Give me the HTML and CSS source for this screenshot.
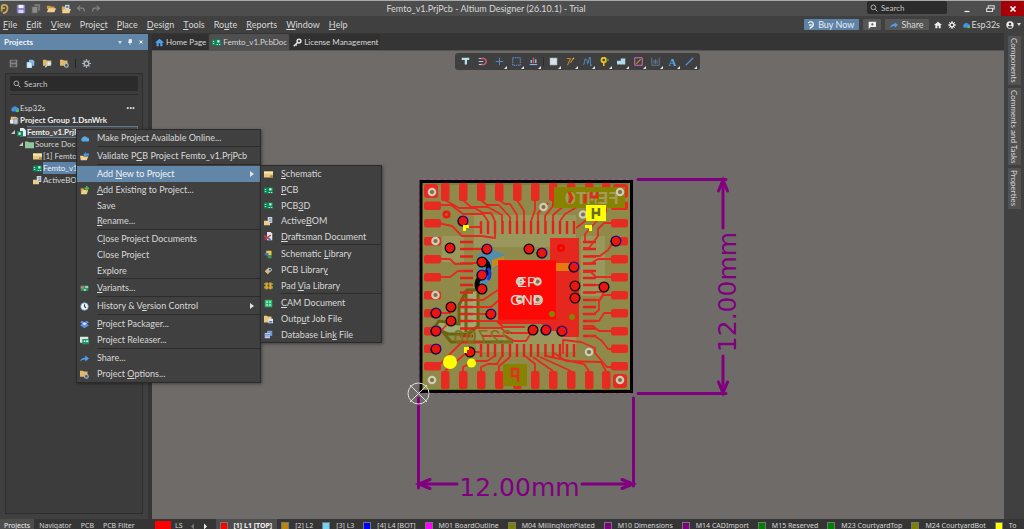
FILE: index.html
```html
<!DOCTYPE html>
<html lang="en">
<head>
<meta charset="utf-8">
<title>Femto_v1.PrjPcb - Altium Designer (26.10.1) - Trial</title>
<link rel="stylesheet" href="styles.css">
</head>
<body>
<svg class="defs" aria-hidden="true">
  <symbol id="folder" viewBox="0 0 12 12"><path d="M1 2h4l1 1h5v7H1z" fill="#d9b36a"/><path d="M1 5h10v5H1z" fill="#efcf8f"/></symbol>
  <symbol id="open" viewBox="0 0 12 12"><path d="M1 2h4l1 1h4v3H1z" fill="#c99c48"/><path d="M3 5h9l-2 5H1z" fill="#f0cf8c"/></symbol>
  <symbol id="find" viewBox="0 0 12 12"><path d="M0 1h4l1 1h6v7H0z" fill="#e3b968"/><circle cx="8" cy="6" r="2.500" fill="#dfeefa" stroke="#b9d3ea"/><path d="M6 8l-3 3" stroke="#cfd9e2" stroke-width="1.500"/></symbol>
  <symbol id="opendoc" viewBox="0 0 12 12"><path d="M1 3h4v6H1z" fill="#d9a94e"/><path d="M5 1h5v6H5z" fill="#dfeaf7"/><path d="M6 2h3v3H6z" fill="#4f8ad0"/><path d="M3 6h9l-2 5H1z" fill="#f0cf8c"/></symbol>
  <symbol id="validate" viewBox="0 0 12 12"><path d="M0 5h4l1 1h6l-2 5H1z" fill="#f0cf8c"/><path d="M4 4l4-4v2h4v3H8v2z" fill="#4f8ff0"/></symbol>
  <symbol id="addfolder" viewBox="0 0 12 12"><path d="M1 3h4v6H1z" fill="#c99c48"/><path d="M3 5h8l-2 6H1z" fill="#f0cf8c"/><path d="M8 0h2v2h2v2h-2v2H8V4H6V2h2z" fill="#45c52c"/></symbol>
  <symbol id="foldergear" viewBox="0 0 12 12"><path d="M0 1h4l1 1h5v7H0z" fill="#e0b96f"/><circle cx="8.500" cy="8.500" r="2.500" fill="#555" stroke="#b5bec6" stroke-width="1.400"/></symbol>
  <symbol id="save" viewBox="0 0 12 12"><path d="M1 1h10v10H1z" fill="#8079c4"/><path d="M3 1h6v4H3z" fill="#f3f1ff"/><path d="M3 7h6v4H3z" fill="#d9d6f4"/></symbol>
  <symbol id="savegrey" viewBox="0 0 12 12"><path d="M1 1h10v10H1z" fill="#858585"/><path d="M3 2h6v3H3zM3 7h6v3H3z" fill="#505050"/></symbol>
  <symbol id="saveall" viewBox="0 0 12 12"><path d="M4 0h7v8H4z" fill="#777"/><path d="M1 3h7v8H1z" fill="#8c8c8c" stroke="#555"/></symbol>
  <symbol id="docs" viewBox="0 0 12 12"><path d="M4 1h5l2 2v6H4z" fill="#83b9e8"/><path d="M1 4h5l2 2v6H1z" fill="#d8eafa" stroke="#3e7fb8" stroke-width=".500"/></symbol>
  <symbol id="undo" viewBox="0 0 12 12"><path d="M5 2L2 5l3 3M2 5h6q2 0 2 4" fill="none" stroke="#828282" stroke-width="1.500"/></symbol>
  <symbol id="redo" viewBox="0 0 12 12"><path d="M7 2l3 3-3 3M10 5H4Q2 5 2 9" fill="none" stroke="#828282" stroke-width="1.500"/></symbol>
  <symbol id="gear" viewBox="0 0 12 12"><circle cx="6" cy="6" r="3" fill="none" stroke="currentColor" stroke-width="2"/><path d="M6 0v3M6 9v3M0 6h3M9 6h3M2 2l2 2M8 8l2 2M10 2L8 4M4 8l-2 2" stroke="currentColor" stroke-width="1.500"/></symbol>
  <symbol id="cloud" viewBox="0 0 12 12"><path d="M3 10a3 3 0 0 1 0-5 4 4 0 0 1 7 0 2.500 2.500 0 0 1 0 5z" fill="#58a9e6"/></symbol>
  <symbol id="cloudok" viewBox="0 0 12 12"><path d="M3 10a3 3 0 0 1 0-5 4 4 0 0 1 7 0 2.500 2.500 0 0 1 0 5z" fill="#3f93e0"/><circle cx="10" cy="9" r="2" fill="#56c653"/></symbol>
  <symbol id="pcb" viewBox="0 0 12 12"><path d="M0 2h12v8H0z" fill="#0c8758"/><path d="M1 4h2v1H1zm0 3h2v1H1zM7 3h3v3H7zM6 8h2v1H6zM9 8h2v1H9z" fill="#d9fff0"/></symbol>
  <symbol id="sch" viewBox="0 0 12 12"><path d="M0 2h12v8H0z" fill="#e7c87c"/><path d="M0 2h12v3H0z" fill="#f6e5ad"/><path d="M8 7h4v3H8z" fill="#ad8a41"/></symbol>
  <symbol id="bom" viewBox="0 0 12 12"><path d="M0 5h8v6H0z" fill="#edcd84"/><path d="M5 0h6v8H5z" fill="#cdd7e4"/><path d="M7 2h3M7 4h3M7 6h3" stroke="#747f9a"/></symbol>
  <symbol id="draft" viewBox="0 0 12 12"><path d="M4 0h5l2 2v9H4z" fill="#dfe7f3"/><path d="M0 5l8 5M1 10l8-6" stroke="#cf3946" stroke-width="2"/><path d="M6 8l3 3" stroke="#4377d2" stroke-width="2"/></symbol>
  <symbol id="schlib" viewBox="0 0 12 12"><path d="M3 1h7v6H3z" fill="#e9c84e"/><path d="M1 4h5v3H1z" fill="#3779c4"/><path d="M5 7h5v4H5z" fill="#3c9f4c"/></symbol>
  <symbol id="pcblib" viewBox="0 0 12 12"><path d="M1 7l5-5 5 3-6 6z" fill="#dfbd70"/><circle cx="8" cy="5" r="2" fill="#34546f" stroke="#b6d3ec"/></symbol>
  <symbol id="padlib" viewBox="0 0 12 12"><path d="M0 3h12v2H0zm0 4h12v3H0z" fill="#7ca72e"/><path d="M2 2h3v9H2zm5 0h3v9H7z" fill="#dda63a"/><path d="M5 5h2v3H5z" fill="#b24221"/></symbol>
  <symbol id="cam" viewBox="0 0 12 12"><path d="M1 1h10v10H1z" fill="#2eb872"/><path d="M3 3h2v2H3zm4 0h2v2H7zM3 7h2v2H3zm4 0h2v2H7z" fill="#caffe1"/></symbol>
  <symbol id="job" viewBox="0 0 12 12"><path d="M0 1h4l1 1h5v8H0z" fill="#e9c77f"/><path d="M6 5h6v6H6z" fill="#dce9fb"/><path d="M7 8h4v2H7z" fill="#3e74c9"/></symbol>
  <symbol id="db" viewBox="0 0 12 12"><path d="M4 1h7v7H4z" fill="#739bd0"/><path d="M1 4h7v7H1z" fill="#b7cff0"/><path d="M1 6h7M1 8h7" stroke="#6688b6"/></symbol>
  <symbol id="variant" viewBox="0 0 12 12"><path d="M1 2h10v7H1z" fill="#309767"/><path d="M1 3h4v3H1z" fill="#d77d70"/><path d="M7 3h4v2H7zM5 7h3v2H5z" fill="#b7e7ca"/></symbol>
  <symbol id="clock" viewBox="0 0 12 12"><circle cx="6" cy="6" r="5" fill="#edf4fa" stroke="#7da6cf"/><path d="M6 3v3l2 2" fill="none" stroke="#29445f" stroke-width="1.500"/></symbol>
  <symbol id="pack" viewBox="0 0 12 12"><path d="M0 3l3-2 3 2 3-2 3 2-3 2 3 2-3 2-3 2-3-2-3-2 3-2z" fill="#5f8fe8"/><path d="M3 5l3-2 3 2-3 2z" fill="#d7e7fb"/></symbol>
  <symbol id="release" viewBox="0 0 12 12"><path d="M0 1h11v8H0z" fill="#d7e9e3"/><path d="M3 4h9v7H3z" fill="#239468"/><path d="M5 6h2v2H5zM8 6h3v2H8z" fill="#e8fff8"/></symbol>
  <symbol id="share" viewBox="0 0 12 12"><path d="M7 2l5 4-5 4V7.500Q3 7 0 10 1 5 7 4.500z" fill="#4f9fee"/></symbol>
  <symbol id="home" viewBox="0 0 12 12"><path d="M0 6l6-5 6 5H10v5H7V7H5v4H2V6z" fill="currentColor"/></symbol>
  <symbol id="key" viewBox="0 0 12 12"><circle cx="8" cy="4" r="2.500" fill="none" stroke="#e5e5e5" stroke-width="2"/><path d="M6 6l-5 5M3 8l2 2" stroke="#e5e5e5" stroke-width="2"/></symbol>
  <symbol id="search" viewBox="0 0 12 12"><circle cx="5" cy="5" r="3.500" fill="none" stroke="#c4c4c4" stroke-width="1.300"/><path d="M8 8l3 3" stroke="#c4c4c4" stroke-width="1.500"/></symbol>
  <symbol id="proj" viewBox="0 0 12 12"><path d="M4 0h5l3 3v8H4z" fill="#dfeeea"/><path d="M0 4h8v7H0z" fill="#138a5e"/><path d="M2 6h3v3H2z" fill="#d6f6e9"/></symbol>
  <symbol id="group" viewBox="0 0 12 12"><path d="M1 1h7l3 2v7H1z" fill="#e3bd70"/><path d="M0 5h6v5H0z" fill="#e7eaf0"/><path d="M5 4h5v7H5z" fill="#b5c7dc" stroke="#5d738e" stroke-width=".700"/></symbol>
</svg>

<header class="titlebar">
  <div class="quick">
    <svg class="logo" viewBox="0 0 12 14"><path d="M1 4Q1 1 5 1q5 0 5 5 0 6-6 7l-1-2q5-1 5-5Q8 3 5 3 3 3 3 5h3v2H3v3H1z" fill="#c9a755"/></svg>
    <button aria-label="Save"><svg><use href="#save"/></svg></button>
    <button aria-label="Save all"><svg><use href="#saveall"/></svg></button>
    <button aria-label="Open"><svg><use href="#open"/></svg></button>
    <button aria-label="Open project"><svg><use href="#opendoc"/></svg></button>
    <button aria-label="Undo"><svg><use href="#undo"/></svg></button>
    <button aria-label="Redo"><svg><use href="#redo"/></svg></button>
  </div>
  <h1>Femto_v1.PrjPcb - Altium Designer (26.10.1) - Trial</h1>
  <div class="window-tools">
    <label class="search top-search"><svg><use href="#search"/></svg><input type="text" placeholder="Search" aria-label="Search"></label>
    <button aria-label="Minimize"><svg viewBox="0 0 12 12"><path d="M3 9h6" stroke="#eee" stroke-width="1.500"/></svg></button>
    <button aria-label="Restore"><svg viewBox="0 0 12 12"><path d="M2 5h7v4H2zM4 5V2h7v4H9" fill="none" stroke="#ddd" stroke-width="1.300"/></svg></button>
    <button class="close" aria-label="Close"><svg viewBox="0 0 12 12"><path d="M3 3l6 6M9 3l-6 6" stroke="#fff" stroke-width="2"/></svg></button>
  </div>
</header>

<div class="menubar">
  <nav>
    <button><u>F</u>ile</button><button><u>E</u>dit</button><button><u>V</u>iew</button><button>Proje<u>c</u>t</button><button><u>P</u>lace</button><button><u>D</u>esign</button><button><u>T</u>ools</button><button>Ro<u>u</u>te</button><button><u>R</u>eports</button><button><u>W</u>indow</button><button><u>H</u>elp</button>
  </nav>
  <div class="account">
    <button class="buy"><svg viewBox="0 0 12 12"><path d="M2 3q4-4 7 0 2 5-5 8M3 6h4" fill="none" stroke="#e9f2fb" stroke-width="2"/></svg>Buy Now</button>
    <button class="grey note" aria-label="Feedback"><svg viewBox="0 0 12 12"><path d="M1 1h11v8H4l-3 3z" fill="#f2f2f2"/><path d="M6.500 3v4M4.500 5h4" stroke="#555" stroke-width="1.200"/></svg></button>
    <button class="grey"><svg><use href="#share"/></svg>Share</button>
    <button class="plain" aria-label="Home"><svg><use href="#home"/></svg></button>
    <button class="plain" aria-label="Settings"><svg><use href="#gear"/></svg></button>
    <button class="plain server"><svg><use href="#cloudok"/></svg>Esp32s</button>
    <button class="plain user" aria-label="Account"><svg viewBox="0 0 12 12"><circle cx="6" cy="6" r="5.500" fill="#eee"/><circle cx="6" cy="4.500" r="2" fill="#444"/><path d="M2 9q4-4 8 0-4 3-8 0" fill="#444"/></svg><i class="caret"></i></button>
  </div>
</div>

<main class="workspace">
  <aside class="projects">
    <header><h2>Projects</h2><button aria-label="Panel menu"><i class="caret"></i></button><button aria-label="Pin"><svg viewBox="0 0 12 12"><path d="M4 1h5v6H4zM2 7h8M6 7v5" fill="#eee" stroke="#eee" stroke-width="1.500"/></svg></button><button aria-label="Close panel"><svg viewBox="0 0 12 12"><path d="M3 3l6 6M9 3l-6 6" stroke="#fff" stroke-width="2"/></svg></button></header>
    <div class="panel-tools">
      <button aria-label="Save"><svg><use href="#savegrey"/></svg></button><button aria-label="Documents"><svg><use href="#docs"/></svg></button><button aria-label="Find in project"><svg><use href="#find"/></svg></button><button aria-label="Project options"><svg><use href="#foldergear"/></svg></button><hr><button aria-label="Panel settings"><svg><use href="#gear"/></svg></button>
    </div>
    <div class="panel-body">
      <label class="search"><svg><use href="#search"/></svg><input type="text" placeholder="Search" aria-label="Search projects"></label>
      <hr>
      <ul class="tree">
        <li><svg><use href="#cloudok"/></svg><span>Esp32s</span><button class="more" aria-label="More">•••</button></li>
        <li class="strong"><svg><use href="#group"/></svg><span>Project Group 1.DsnWrk</span></li>
        <li class="strong level1"><i class="fold"></i><svg><use href="#proj"/></svg><span class="outlined">Femto_v1.PrjPcb</span></li>
        <li class="level2"><i class="fold"></i><svg viewBox="0 0 12 12"><path d="M0 2h4l1 1h7v8H0z" fill="#8fc79a"/></svg><span>Source Documents</span></li>
        <li class="level3"><svg><use href="#sch"/></svg><span>[1] Femto_v1.SchDoc</span></li>
        <li class="level3"><svg><use href="#pcb"/></svg><span class="selected">Femto_v1.PcbDoc</span></li>
        <li class="level3"><svg><use href="#bom"/></svg><span>ActiveBOM.BomDoc</span></li>
      </ul>
    </div>
  </aside>

  <section class="documents">
    <div class="doc-tabs">
      <button><svg class="blue"><use href="#home"/></svg>Home Page</button><button class="active"><svg><use href="#pcb"/></svg>Femto_v1.PcbDoc</button><button><svg><use href="#key"/></svg>License Management</button>
    </div>
    <div class="canvas">
      <svg class="board" viewBox="152 51 852 468" role="img" aria-label="PCB layout of Femto_v1">
        <defs>
          <g id="ring"><circle r="5.500" fill="#060606"/><circle r="4.200" fill="#f5100d"/><circle r="1.200" fill="#a83a18"/></g>
          <g id="bring"><circle r="5.500" fill="#1a129b"/><circle cx="-.500" cy=".500" r="5" fill="#0b0820"/><circle r="4.200" fill="#f5100d"/><circle r="1.200" fill="#a83a18"/></g>
          <g id="hole"><circle r="3.200" fill="#7c7240" stroke="#cfcbbb" stroke-width="2.200"/></g>
          <g id="tops" fill="#e82b22"><rect x="441" width="8.500" height="18" rx="2"/><rect x="459" width="8.500" height="18" rx="2"/><rect x="477" width="8.500" height="18" rx="2"/><rect x="495" width="8.500" height="18" rx="2"/><rect x="513" width="8.500" height="18" rx="2"/><rect x="531" width="8.500" height="18" rx="2"/><rect x="549" width="8.500" height="18" rx="2"/><rect x="567" width="8.500" height="18" rx="2"/><rect x="585" width="8.500" height="18" rx="2"/><rect x="602" width="8.500" height="18" rx="2"/></g>
          <g id="sides" fill="#e82b22"><rect y="201.500" width="17" height="8.500" rx="2"/><rect y="219" width="17" height="8.500" rx="2"/><rect y="237" width="17" height="8.500" rx="2"/><rect y="255" width="17" height="8.500" rx="2"/><rect y="273" width="17" height="8.500" rx="2"/><rect y="291" width="17" height="8.500" rx="2"/><rect y="309" width="17" height="8.500" rx="2"/><rect y="327" width="17" height="8.500" rx="2"/><rect y="344.500" width="17" height="8.500" rx="2"/><rect y="362" width="17" height="8.500" rx="2"/></g>
        </defs>
        <rect x="419" y="179.500" width="214" height="214" fill="#8f8a49" stroke="#8d4a8d" stroke-dasharray="4 3"/>
        <path d="M421 181.500h210.500v210H421z" fill="#8f8a49" stroke="#020202" stroke-width="3"/>
        <path d="M423 184h206M423 389.500h206" stroke="#6d7a20" stroke-width="1"/>
        <g fill="#a2a06a" opacity=".6"><path d="M474 215h102v32h-102zM442 236h22v26h-22zM476 328h100v24H476zM581 236h24v60h-24z"/></g>
        <path d="M478 254l14-4 12 4v10l-14 6-4 24-8-2z" fill="#528ea7"/>
        <path d="M492 260l12-4v38h-4v-30l-8 4z" fill="#c88a15"/>
        <path d="M459 305l8-15h11v36l-10 8h-20l-14-6 5-7 20 3z" fill="#9dab74" stroke="#69620e" stroke-width="3"/>
        <path d="M432 328q6-4 10 3l9 11h62M466 290v42" fill="none" stroke="#6d6412" stroke-width="3"/>
        <use href="#tops" y="183"/><use href="#tops" y="371"/>
        <use href="#sides" x="424"/><use href="#sides" x="611"/>
        <g fill="#e82b22"><rect x="424" y="184" width="14" height="14" rx="3"/><rect x="613" y="184" width="15" height="14" rx="3"/><rect x="613" y="374" width="14" height="14" rx="3"/></g>
        <g fill="none" stroke="#e32019" stroke-width="2.400">
          <path d="M481 221v13M488 221v13M495 221v13M502.500 221v13M510 221v13M517 221v13M524 221v13M531 221v13M538 221v13M545.500 221v13M553 221v13M560 221v13M567 221v13M574 221v13"/>
          <path d="M481 344v13M488 344v13M495 344v13M502.500 344v13M510 344v13M517 344v13M524 344v13M531 344v13M538 344v13M545.500 344v13M553 344v13M560 344v13M567 344v13M574 344v13"/>
          <path d="M460 242h13M460 249h13M460 256.500h13M460 263.500h13M460 271h13M460 278h13M460 285h13M460 292.500h13M460 300h13M460 307h13M460 314h13M460 321h13M460 328.500h13M460 336h13"/>
          <path d="M583 242h13M583 249h13M583 256.500h13M583 263.500h13M583 271h13M583 278h13M583 285h13M583 292.500h13M583 300h13M583 307h13M583 314h13M583 321h13M583 328.500h13M583 336h13"/>
        </g>
        <g fill="none" stroke="#e5291f" stroke-width="1.800" stroke-linejoin="round">
          <path d="M438 205h13l12 9h20l5 7M445 200l14 8h16l8 5h8l4 8M463 200l8 7h17l14 8v6M481 200l6 5h12l11 12v4M499 200l6 4h5l7 11v6M517 200l7 11v10M535 200v10l-4 11M553 200v6l-8 10v5M538 221v-8l10-10M571 200l-18 15v6M589 200l-24 14-5 7M606 200v12l-17 6-13 10"/>
          <path d="M438 223l14 3 10 10h20l13 2v-17M438 259h12l5 5h8M438 277h12l8-6h6M466 227h15v-6M473 249h14M473 263h9"/>
          <path d="M612 223h-8l-6 6v7l-9 12h-6M612 259h-14l-8 5h-7M612 277h-16l-5-5h-8M614 241l-6 9-8 6h-10M612 205h-7l-2 8-8 10-10 11v8M596 285h8M596 292h8l-4 8h-10"/>
          <path d="M612 295h-9l-4 6v9l-5 4h-10M612 313h-8l-5 8h-12M612 331h-13l-6-5h-10M612 349h-4l-6-8-7-5h-8M612 367h-5l-12-14v-5l-14-6-18-2v14"/>
          <path d="M441 313h10M441 331l9-10M438 366l24-24h20M445 371l20-17 8-2h9M463 371v-4l12-6h12l8-5M481 371v-4l7-3h9l5-8M499 371v-5l11-9M535 371v-7l-10-8M553 371l-20-14M571 371l-31-14M589 371l-5-7-38-8M606 371l-5-9-35-1-12-8M473 300h10l15-10M473 307h18l8-7M473 314h18M473 321h24l6 6h22M473 328h28l6 5h26M482 336h24l8 5h12l7-11"/>
        </g>
        <path d="M550 238h29v99h-17l-5-6h-10l-5-7H498v-64h52z" fill="#ee1c18" opacity=".9"/>
        <path d="M553 263h24v8h-24z" fill="#e87910"/>
        <rect x="498.500" y="260.500" width="57.500" height="59" fill="#fe0806"/>
        <path d="M484 260q7 6 3 13-10 5-10 11t5 8" fill="none" stroke="#050505" stroke-width="5"/>
        <path d="M488 268q4 6 0 12" fill="none" stroke="#1d3bd2" stroke-width="3"/>
        <g><use href="#bring" x="463" y="221"/><use href="#ring" x="450" y="248"/><use href="#bring" x="487" y="249"/><use href="#ring" x="482" y="262"/><use href="#bring" x="482" y="275"/><use href="#ring" x="482" y="289"/><use href="#ring" x="529" y="249"/><use href="#bring" x="542" y="253"/><use href="#bring" x="574" y="267"/><use href="#ring" x="575" y="286"/><use href="#ring" x="604" y="287"/><use href="#ring" x="575" y="298"/><use href="#bring" x="491" y="314"/><use href="#ring" x="451" y="307"/><use href="#ring" x="451" y="321"/><use href="#ring" x="470" y="352"/><use href="#ring" x="533" y="330"/><use href="#bring" x="546" y="330"/><use href="#bring" x="562" y="331"/><use href="#bring" x="436" y="313"/><use href="#bring" x="436" y="331"/><use href="#bring" x="436" y="349"/><use href="#bring" x="616" y="241"/></g>
        <circle cx="446.500" cy="214.500" r="4" fill="#ef1610"/><circle cx="446.500" cy="214.500" r="1.300" fill="#a4772d"/><circle cx="561" cy="248" r="4" fill="#f00"/><circle cx="561" cy="248" r="1.200" fill="#a9432a"/>
        <g fill="#858300"><circle cx="552" cy="314" r="3"/><circle cx="572" cy="317" r="3"/><path d="M503 364h24v22h-24zM554 187h71v21h-71z"/></g>
        <path d="M518 369h-6v7h6M518 368v14M512 369v7" fill="none" stroke="#e43020" stroke-width="2.500"/>
        <text class="silk-name" transform="translate(619 204) scale(-1 1)">FEMTO</text>
        <path d="M569 192l3 6-3 5M585 194v9M591 192v5h6v-5" fill="none" stroke="#d8301c" stroke-width="3"/>
        <text class="silk-code" transform="translate(513 343) scale(-1 1)">22706</text>
        <g><use href="#hole" x="432" y="192"/><use href="#hole" x="435.500" y="241"/><use href="#hole" x="432" y="380"/><use href="#hole" x="435.500" y="295"/><use href="#hole" x="543.500" y="207"/><use href="#hole" x="583" y="214.500"/><use href="#hole" x="620" y="192"/><use href="#hole" x="589" y="352"/><use href="#hole" x="620" y="380"/><use href="#hole" x="520" y="281.500"/><use href="#hole" x="537.500" y="281.500"/><use href="#hole" x="520" y="299.500"/><use href="#hole" x="537.500" y="299.500"/></g>
        <path d="M586 205h20v16h-20z" fill="#ff0"/><path d="M593 219v-11M593 213h6M599 208v8" fill="none" stroke="#6c6b18" stroke-width="2.500"/>
        <g fill="#ff0"><circle cx="450" cy="362" r="7"/><circle cx="471.500" cy="363" r="4.500"/><path d="M463 225h6v3h-3v3h-3zM585 225h7v6h-3v-3h-4zM464 347h5v3h-2v3h-3z"/></g>
        <text class="chip" x="527" y="287" text-anchor="middle">EP</text>
        <text class="chip" x="527" y="305" text-anchor="middle">GND</text>
        <g fill="none" stroke="#80007f" stroke-width="3" stroke-linecap="round">
          <path d="M638 179.500h88M638 393.500h88M723 180v48M723 356v37M718.500 191l4.500-11 4.500 11M718.500 382l4.500 11 4.500-11"/>
          <path d="M418.500 398v90M633.500 398v88M419 484h38M582 484h51M430 479.500l-11 4.500 11 4.500M622 479.500l11 4.500-11 4.500"/>
        </g>
        <text class="dimension" x="519.500" y="496" text-anchor="middle">12.00mm</text>
        <text class="dimension" transform="translate(736 292) rotate(-90)" text-anchor="middle">12.00mm</text>
        <g fill="none" stroke="#dedede"><circle cx="418.500" cy="393.500" r="10.500"/><path d="M410 385l17 17M427 385l-17 17"/></g>
      </svg>

      <div class="tools" role="toolbar" aria-label="Active bar">
        <button aria-label="Filter"><svg viewBox="0 0 12 12"><path d="M1 1h10v3H8v6H5V4H1z" fill="#b9dfe8"/></svg></button>
        <button aria-label="Snapping"><svg viewBox="0 0 12 12"><path d="M4 2h4q3 1 3 4t-3 4H4" fill="none" stroke="#d05870" stroke-width="2"/><path d="M1 2h3M1 6h6M1 10h4" stroke="#a8c6ec" stroke-width="1.500"/></svg></button>
        <button class="more-tools" aria-label="Move"><svg viewBox="0 0 12 12"><path d="M6 1v10M1 6h10" stroke="#5289d1" stroke-width="1.300"/></svg></button>
        <button class="more-tools" aria-label="Select"><svg viewBox="0 0 12 12"><path d="M1 1h10v10H1z" fill="none" stroke="#6398dc" stroke-width="1.300" stroke-dasharray="2 1"/></svg></button>
        <button class="more-tools" aria-label="Align"><svg viewBox="0 0 12 12"><path d="M2 4h2v4H2zM8 3h2v5H8z" fill="#85b7e7"/><path d="M5 1h2v7H5z" fill="#e5555e"/><path d="M1 10h10" stroke="#85b7e7" stroke-width="1.500"/></svg></button>
        <hr>
        <button class="more-tools" aria-label="Place component"><svg viewBox="0 0 12 12"><path d="M1 1h10v10H1z" fill="#b0bec7"/><path d="M2 2h8v8H2z" fill="#d6e1e8"/></svg></button>
        <button class="more-tools" aria-label="Route"><svg viewBox="0 0 12 12"><path d="M1 2h5L2 11M10 1L6 8" fill="none" stroke="#b78332" stroke-width="1.500"/><circle cx="10" cy="2" r="1" fill="#ebba63"/></svg></button>
        <button class="more-tools" aria-label="Tune length"><svg viewBox="0 0 12 12"><path d="M0 10q2 0 2-4t2-3 2 5 2-5 2 3 2 4" fill="none" stroke="#517dac" stroke-width="1.500"/></svg></button>
        <button class="more-tools" aria-label="Place via"><svg viewBox="0 0 12 12"><circle cx="5" cy="4" r="3" fill="none" stroke="#efc316" stroke-width="2.500"/><path d="M5 7v5" stroke="#efc316" stroke-width="2"/><path d="M8 4h4" stroke="#48a82c" stroke-width="2"/></svg></button>
        <button class="more-tools" aria-label="Place polygon"><svg viewBox="0 0 12 12"><path d="M0 5h5V2h6v8H0z" fill="#b1dbe8"/></svg></button>
        <button class="more-tools" aria-label="Place room"><svg viewBox="0 0 12 12"><path d="M1 1h10v10H1z" fill="none" stroke="#d571c0" stroke-width="1.300"/><path d="M3 9l6-6" stroke="#b18936" stroke-width="1.500"/></svg></button>
        <button class="more-tools" aria-label="Dimension"><svg viewBox="0 0 12 12"><path d="M1 1v10h10V1M4 4v5M6 3v6M8 4v5" fill="none" stroke="#6b8eae"/></svg></button>
        <button class="more-tools letter">A</button>
        <button class="more-tools" aria-label="Place line"><svg viewBox="0 0 12 12"><path d="M1 11L11 1" stroke="#4f99e0" stroke-width="1.500"/></svg></button>
      </div>
    </div>
  </section>

  <aside class="rail"><button>Components</button><button>Comments and Tasks</button><button>Properties</button></aside>
</main>

<footer class="bottom">
  <nav class="panel-tabs"><button class="active">Projects</button><button>Navigator</button><button>PCB</button><button>PCB Filter</button></nav>
  <div class="layers">
    <button class="ls"><i class="wide red"></i>LS</button>
    <button class="step" aria-label="Previous layer"><svg viewBox="0 0 12 12"><path d="M8 2v8L4 6z" fill="#777"/></svg></button><button class="step" aria-label="Next layer"><svg viewBox="0 0 12 12"><path d="M4 2v8l4-4z" fill="#eee"/></svg></button>
    <button class="layer active"><i class="red"></i>[1] L1 [TOP]</button>
    <button class="layer"><i class="gold"></i>[2] L2</button>
    <button class="layer"><i class="sky"></i>[3] L3</button>
    <button class="layer"><i class="navy"></i>[4] L4 [BOT]</button>
    <button class="layer"><i class="magenta"></i>M01 BoardOutline</button>
    <button class="layer"><i class="olive"></i>M04 MillingNonPlated</button>
    <button class="layer"><i class="purple"></i>M10 Dimensions</button>
    <button class="layer"><i class="purple"></i>M14 CADImport</button>
    <button class="layer"><i class="green"></i>M15 Reserved</button>
    <button class="layer"><i class="green"></i>M23 CourtyardTop</button>
    <button class="layer"><i class="olive"></i>M24 CourtyardBot</button>
    <button class="layer"><i class="yellow"></i>To</button>
  </div>
</footer>

<div class="menu context" role="menu">
  <div class="set"><button role="menuitem"><svg><use href="#cloud"/></svg>Make Project Available Online...</button></div>
  <div class="set"><button role="menuitem"><svg><use href="#validate"/></svg><span>Validate P<u>C</u>B Project Femto_v1.PrjPcb</span></button></div>
  <div class="set">
    <button role="menuitem" class="current"><span>Add <u>N</u>ew to Project</span><i class="arrow"></i></button>
    <button role="menuitem"><svg><use href="#addfolder"/></svg><span><u>A</u>dd Existing to Project...</span></button>
    <button role="menuitem"><span>Save</span></button>
    <button role="menuitem"><span><u>R</u>ename...</span></button>
  </div>
  <div class="set">
    <button role="menuitem"><span>C<u>l</u>ose Project Documents</span></button>
    <button role="menuitem"><span>Close Project</span></button>
    <button role="menuitem"><span>Explore</span></button>
  </div>
  <div class="set"><button role="menuitem"><svg><use href="#variant"/></svg><span><u>V</u>ariants...</span></button></div>
  <div class="set"><button role="menuitem"><svg><use href="#clock"/></svg><span>History &amp; V<u>e</u>rsion Control</span><i class="arrow"></i></button></div>
  <div class="set">
    <button role="menuitem"><svg><use href="#pack"/></svg><span><u>P</u>roject Packager...</span></button>
    <button role="menuitem"><svg><use href="#release"/></svg><span>Project Releaser...</span></button>
  </div>
  <div class="set">
    <button role="menuitem"><svg><use href="#share"/></svg><span>Share...</span></button>
    <button role="menuitem"><svg><use href="#foldergear"/></svg><span>Project <u>O</u>ptions...</span></button>
  </div>
</div>

<div class="menu submenu" role="menu">
  <div class="set">
    <button role="menuitem"><svg><use href="#sch"/></svg><span><u>S</u>chematic</span></button>
    <button role="menuitem"><svg><use href="#pcb"/></svg><span><u>P</u>CB</span></button>
    <button role="menuitem"><svg><use href="#pcb"/></svg><span>PCB<u>3</u>D</span></button>
    <button role="menuitem"><svg><use href="#bom"/></svg><span>Active<u>B</u>OM</span></button>
    <button role="menuitem"><svg><use href="#draft"/></svg><span><u>D</u>raftsman Document</span></button>
  </div>
  <div class="set">
    <button role="menuitem"><svg><use href="#schlib"/></svg><span>Schematic <u>L</u>ibrary</span></button>
    <button role="menuitem"><svg><use href="#pcblib"/></svg><span>PCB Librar<u>y</u></span></button>
    <button role="menuitem"><svg><use href="#padlib"/></svg><span>Pad <u>V</u>ia Library</span></button>
  </div>
  <div class="set">
    <button role="menuitem"><svg><use href="#cam"/></svg><span><u>C</u>AM Document</span></button>
    <button role="menuitem"><svg><use href="#job"/></svg><span>Outp<u>u</u>t Job File</span></button>
    <button role="menuitem"><svg><use href="#db"/></svg><span>Database Lin<u>k</u> File</span></button>
  </div>
</div>
</body>
</html>
```

FILE: styles.css
```css
* { box-sizing: border-box; }
body {
  margin: 0;
  height: 100vh;
  overflow: hidden;
  display: flex;
  flex-direction: column;
  background: #404040;
  color: #d8d8d8;
  font: 8px/12px Lato, "Noto Sans", sans-serif;
}
button, input {
  font: inherit;
  color: inherit;
  background: none;
  border: 0;
  padding: 0;
  margin: 0;
  white-space: nowrap;
}
button { display: flex; align-items: center; }
h1, h2 { margin: 0; font: inherit; }
svg { width: 10px; height: 10px; flex: none; }
u { text-underline-offset: 1px; text-decoration-thickness: 1px; }
.defs { position: absolute; width: 0; height: 0; }
.caret { border: 2px solid transparent; border-top: 3px solid #ddd; border-bottom: 0; }

.titlebar {
  flex: none;
  height: 16px;
  border-top: 1px solid #a7acaa;
  background: #4d4d4d;
  display: grid;
  grid-template-columns: 1fr auto 1fr;
}
.titlebar h1 { font-size: 9px; line-height: 15px; padding-right: 52px; }
.quick { display: flex; align-items: center; gap: 5px; }
.quick .logo { height: 12px; margin-right: 1px; }
.window-tools { display: flex; justify-content: flex-end; }
.window-tools button { width: 23px; justify-content: center; }
.window-tools .close { background: #a50007; }
.search { display: flex; align-items: center; gap: 3px; background: #2b2b2b; border-radius: 2px; padding: 0 3px; }
.search svg { width: 8px; height: 8px; }
.search input { width: 100%; min-width: 0; }
.search input::placeholder { color: #c8c8c8; opacity: 1; }
.top-search { width: 80px; height: 13px; margin-right: 8px; }

.menubar {
  flex: none;
  height: 17px;
  display: flex;
  justify-content: space-between;
  align-items: center;
  font-size: 9px;
  background: #404040;
}
.menubar nav { display: flex; gap: 9px; padding-left: 3px; }
.account { display: flex; align-items: center; gap: 4px; padding-right: 2px; }
.account svg { width: 8px; height: 8px; }
.account button { gap: 3px; height: 11px; }
.account .buy { background: #5f83a6; color: #e8eef5; padding: 0 5px 0 3px; border-radius: 1px; }
.account .grey { background: #565656; padding: 0 5px; border-radius: 1px; }
.account .plain { color: #eee; padding: 0 1px; }
.account .server { color: #d8d8d8; gap: 2px; }

.workspace { flex: 1; min-height: 0; display: flex; background: #353535; }
.projects { width: 148px; flex: none; margin-top: 1px; display: flex; flex-direction: column; background: #404040; }
.projects header { height: 16px; display: flex; align-items: center; gap: 5px; background: #6286a8; padding: 0 4px; }
.projects h2 { flex: 1; font-weight: 700; color: #f2f5f8; }
.projects header svg { width: 6px; height: 6px; }
.panel-tools { height: 23px; display: flex; align-items: flex-end; gap: 8px; padding: 0 9px 5px; color: #aab4bc; }
.panel-tools svg { width: 9px; height: 9px; }
.panel-tools hr { width: 1px; height: 9px; margin: 0 -2px; border: 0; background: #222; }
.panel-body { flex: 1; margin: 0 5px 5px; padding: 2px 4px; border: 1px solid #2e2e2e; background: #3c3c3c; }
.panel-body .search { height: 15px; }
.panel-body > hr { height: 1px; margin: 3px 0 7px; border: 0; background: #2b2b2b; }
.tree { list-style: none; margin: 0; padding: 0; }
.tree li { height: 12px; display: flex; align-items: center; gap: 1px; white-space: nowrap; overflow: hidden; }
.tree svg { width: 9px; height: 9px; }
.tree .strong { font-weight: 700; color: #ececec; }
.tree .more { margin-left: auto; font-size: 5px; padding-right: 3px; }
.tree .level1 { padding-left: 1px; }
.tree .level2 { padding-left: 9px; }
.tree .level3 { padding-left: 23px; }
.fold { border-left: 4px solid transparent; border-bottom: 4px solid #c8c8c8; margin-right: 1px; }
.outlined { flex: 1; line-height: 10px; border: 1px solid #5f7990; border-left: 0; background: #4d4d4d; }
.selected { flex: 1; background: #5f83a6; color: #eef3f8; }

.documents { flex: 1; min-width: 0; margin-left: 4px; display: flex; flex-direction: column; }
.doc-tabs { flex: none; height: 18px; padding-top: 1px; display: flex; gap: 1px; border-bottom: 1px solid #555; }
.doc-tabs button { background: #303030; padding: 0 2px 0 3px; gap: 2px; border-radius: 2px 2px 0 0; }
.doc-tabs .active { background: #4f4f4f; }
.doc-tabs svg { width: 9px; height: 9px; }
.doc-tabs .blue { color: #4da0ee; }
.canvas { flex: 1; min-height: 0; position: relative; overflow: hidden; background: #6f6b69; }
.board { display: block; width: 852px; height: 468px; }
.chip { font: 15px "Liberation Sans", sans-serif; fill: #e6d6d2; }
.dimension { font: 25px "DejaVu Sans", sans-serif; fill: #80007f; }
.silk-name { font: 700 18px "Liberation Mono", monospace; fill: #a39b5a; }
.silk-code { font: 20px "Liberation Mono", monospace; fill: #7b7416; }
.tools {
  position: absolute;
  top: 2px;
  left: 303px;
  height: 17px;
  padding: 0 2px;
  display: flex;
  align-items: stretch;
  background: #3f3f3f;
  border-radius: 3px;
}
.tools button { width: 17px; justify-content: center; position: relative; }
.tools svg { width: 9px; height: 9px; }
.tools hr { width: 1px; margin: 4px 1px; border: 0; background: #2e2e2e; }
.more-tools::after {
  content: "";
  position: absolute;
  right: 1px;
  bottom: 1px;
  border-left: 3px solid transparent;
  border-bottom: 3px solid #e4e4e4;
}
.tools .letter { font: 700 11px "Liberation Serif", serif; color: #57a2e8; }

.rail { width: 20px; flex: none; display: flex; flex-direction: column; align-items: center; gap: 3px; padding-top: 3px; background: #404040; }
.rail button { writing-mode: vertical-rl; width: 13px; padding: 2px 0; background: #525252; justify-content: center; }

.bottom { flex: none; height: 10px; display: flex; gap: 4px; overflow: hidden; background: #353535; font: 7px/14px "Noto Sans", sans-serif; }
.panel-tabs { width: 148px; flex: none; display: flex; align-items: flex-start; gap: 1px; }
.panel-tabs button { height: 14px; padding: 0 4px; }
.panel-tabs .active, .layer.active { background: #4d4d4d; color: #f2f2f2; }
.layers { flex: 1; min-width: 0; display: flex; overflow: hidden; align-items: flex-start; }
.layers button { flex: none; height: 14px; gap: 6px; padding: 0 5px 0 4px; }
.layers i { width: 8px; height: 8px; border: 1px solid #777; }
.layers .ls { gap: 4px; padding: 0 3px; }
.layers .wide { width: 16px; height: 10px; border: 0; }
.layers .step { width: 13px; padding: 0 2px; }
.layers .step svg { width: 9px; height: 9px; }
.layers .layer.active { font-weight: 700; margin-left: 4px; }
.red { background: #f00; }
.gold { background: #b8860b; }
.sky { background: #6fd3f5; }
.navy { background: #00f; }
.magenta { background: #f0f; }
.olive { background: #808000; }
.purple { background: #800080; }
.green { background: #008000; }
.yellow { background: #ff0; }

.menu { position: absolute; background: #404040; border: 1px solid #2a2a2a; font-size: 9px; box-shadow: 1px 1px 3px #0006; }
.context { left: 76px; top: 129px; width: 185px; }
.submenu { left: 260px; top: 165px; width: 122px; }
.menu .set { padding-left: 20px; }
.menu .set + .set::before { content: ""; display: block; height: 1px; margin-bottom: 1px; background: #2c2c2c; }
.menu button { position: relative; width: 100%; height: 16px; text-align: left; }
.menu button:nth-child(3), .menu button:nth-child(5) { height: 15px; }
.menu button svg { position: absolute; left: -17px; width: 9px; height: 9px; }
.menu .current::before { content: ""; position: absolute; z-index: -1; inset: 0 0 0 -20px; background: #6286a8; }
.menu .current { z-index: 0; color: #f0f4f8; }
.arrow { margin-left: auto; margin-right: 6px; border: 3px solid transparent; border-left: 4px solid #e2e2e2; border-right: 0; }
```
